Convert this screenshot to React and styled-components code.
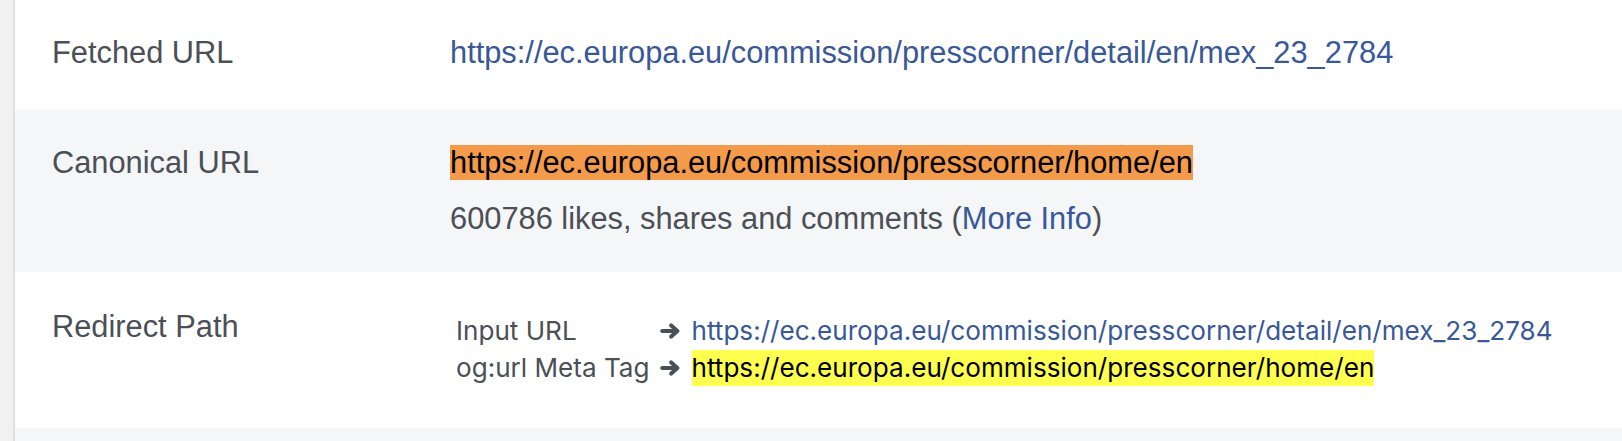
import React from 'react'
import styled, { createGlobalStyle } from 'styled-components'

const GlobalStyle = createGlobalStyle`
  html, body {
    margin: 0;
    padding: 0;
    background: #ffffff;
  }
  body {
    font-family: "Liberation Sans", Arial, sans-serif;
    color: #4b4f56;
    overflow: hidden;
  }
`

const colors = {
  text: '#4b4f56',
  link: '#385898',
  stripe: '#f5f6f7',
  orange: '#f39b4a',
  yellow: '#ffff4f'
}

function Arrow () {
  return (
    <ArrowIcon viewBox="0 0 20 16" aria-hidden="true">
      <path
        d="M2.2 8 H16.6 M11.2 2.4 L17.4 8 L11.2 13.6"
        fill="none"
        stroke="#4b4f56"
        strokeWidth="4"
        strokeLinecap="round"
        strokeLinejoin="round"
      />
    </ArrowIcon>
  )
}

const redirects = [
  { label: 'Input URL', url: 'https://ec.europa.eu/commission/presscorner/detail/en/mex_23_2784' },
  { label: 'og:url Meta Tag', url: 'https://ec.europa.eu/commission/presscorner/home/en', marked: true }
]

function App () {
  return (
    <>
      <GlobalStyle />
      <Page>
        <Strip />
        <Rows>
          <Row pad="35px 0 39px">
            <Label>Fetched URL</Label>
            <Value>
              <Link href="#">https://ec.europa.eu/commission/presscorner/detail/en/mex_23_2784</Link>
            </Value>
          </Row>

          <Row shaded pad="35px 0 35px">
            <Label>Canonical URL</Label>
            <Value>
              <Line>
                <Mark color={colors.orange}>https://ec.europa.eu/commission/presscorner/home/en</Mark>
              </Line>
              <Line gap="20px">
                600786 likes, shares and comments (<Link href="#">More Info</Link>)
              </Line>
            </Value>
          </Row>

          <Row pad="37px 0 41px">
            <Label>Redirect Path</Label>
            <Value>
              <RedirectTable>
                <tbody>
                  {redirects.map((r, i) => (
                    <tr key={i}>
                      <RedirectLabel>{r.label}</RedirectLabel>
                      <RedirectTarget>
                        <Arrow />
                        {r.marked
                          ? <SmallMark>{r.url}</SmallMark>
                          : <SmallLink href="#">{r.url}</SmallLink>}
                      </RedirectTarget>
                    </tr>
                  ))}
                </tbody>
              </RedirectTable>
            </Value>
          </Row>

          <Row shaded pad="40px 0" />
        </Rows>
      </Page>
    </>
  )
}

export default App

const Page = styled.div`
  display: flex;
  width: 1622px;
  height: 441px;
  overflow: hidden;
`

const Strip = styled.div`
  flex: 0 0 13px;
  background: #f1f1f1;
  border-right: 2px solid #dddfe2;
`

const Rows = styled.div`
  flex: 1;
  display: flex;
  flex-direction: column;
`

const Row = styled.div`
  display: grid;
  grid-template-columns: 398px 1fr;
  padding: ${p => p.pad};
  padding-left: 37px;
  background: ${p => (p.shaded ? colors.stripe : '#ffffff')};
  font-size: 30.8px;
  line-height: 36px;
`

const Label = styled.div`
  color: ${colors.text};
  white-space: nowrap;
`

const Value = styled.div`
  color: ${colors.text};
  white-space: nowrap;
`

const Line = styled.div`
  margin-top: ${p => p.gap || 0};
`

const Link = styled.a`
  color: ${colors.link};
  text-decoration: none;
`

const Mark = styled.span`
  background: ${p => p.color};
  color: #000000;
`

const RedirectTable = styled.table`
  border-collapse: collapse;
  margin-top: 2.5px;
  font-family: Inter, "Noto Sans", sans-serif;
  font-size: 26.1px;
  line-height: 37.7px;
`

const RedirectLabel = styled.td`
  padding: 0 5px 0 6px;
  color: ${colors.text};
  white-space: nowrap;
  vertical-align: top;
`

const RedirectTarget = styled.td`
  padding: 0 6px 0 5px;
  white-space: nowrap;
  vertical-align: top;
`

const ArrowIcon = styled.svg`
  width: 20px;
  height: 16px;
  margin-right: 12px;
  vertical-align: 1px;
`

const SmallLink = styled.a`
  color: ${colors.link};
  text-decoration: none;
`

const SmallMark = styled.span`
  background: ${colors.yellow};
  color: #000000;
  padding: 2px 0 3px;
`
